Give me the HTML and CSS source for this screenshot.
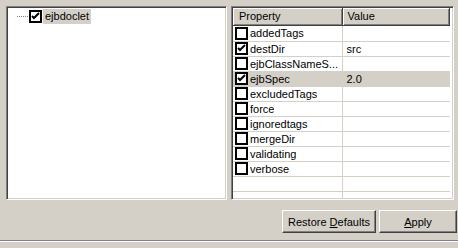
FILE: index.html
```html
<!DOCTYPE html>
<html lang="en">
<head>
    <meta charset="UTF-8">
    <title>ejbdoclet properties</title>
    <link rel="stylesheet" href="styles.css">
</head>
<body>
    <div class="panes">
        <!-- task tree -->
        <div class="tree sunken">
            <div class="tree-item">
                <span class="dots"></span>
                <span class="cb on"><svg width="9" height="9" viewBox="0 0 9 9"><path d="M1 4 L3 6 L8 1" /></svg></span>
                <span class="tree-label">ejbdoclet</span>
            </div>
        </div>

        <!-- property sheet -->
        <div class="props sunken">
            <table class="grid">
                <thead>
                    <tr><th class="col-name">Property</th><th>Value</th></tr>
                </thead>
                <tbody id="rows"></tbody>
            </table>
        </div>
    </div>

    <div class="buttons">
        <button class="btn btn-restore">Restore <u>D</u>efaults</button>
        <button class="btn btn-apply"><u>A</u>pply</button>
    </div>
    <div class="separator"></div>

    <script>
        // Eigenschaften des ejbdoclet-Tasks
        const props = [
            { name: 'addedTags', value: '', on: false },
            { name: 'destDir', value: 'src', on: true },
            { name: 'ejbClassNameS...', value: '', on: false },
            { name: 'ejbSpec', value: '2.0', on: true, selected: true },
            { name: 'excludedTags', value: '', on: false },
            { name: 'force', value: '', on: false },
            { name: 'ignoredtags', value: '', on: false },
            { name: 'mergeDir', value: '', on: false },
            { name: 'validating', value: '', on: false },
            { name: 'verbose', value: '', on: false },
            { name: '', value: '', empty: true },
            { name: '', value: '', empty: true }
        ];

        const check = '<svg width="9" height="9" viewBox="0 0 9 9"><path d="M1 4 L3 6 L8 1" /></svg>';
        const tbody = document.getElementById('rows');

        props.forEach(p => {
            const tr = document.createElement('tr');
            if (p.selected) tr.className = 'selected';
            if (p.empty) tr.className = 'empty';

            const nameCell = document.createElement('td');
            nameCell.className = 'col-name';
            if (!p.empty) {
                nameCell.innerHTML = `<span class="cell"><span class="cb${p.on ? ' on' : ''}">${p.on ? check : ''}</span><span class="name"></span></span>`;
                nameCell.querySelector('.name').textContent = p.name;
            }

            const valueCell = document.createElement('td');
            valueCell.textContent = p.value;

            tr.appendChild(nameCell);
            tr.appendChild(valueCell);
            tbody.appendChild(tr);
        });
    </script>
</body>
</html>
```

FILE: styles.css
```css
body {
    margin: 0;
    padding: 6px 1px 0 6px;
    background: #d4d0c8;
    font-family: "Liberation Sans", Arial, sans-serif;
    font-size: 11px;
    color: #000;
    width: 451px;
    height: 242px;
    overflow: hidden;
}
.panes {
    display: flex;
    gap: 4px;
    height: 194px;
}
.sunken {
    box-sizing: border-box;
    background: white;
    border: 1px solid;
    border-color: #808080 #fff #fff #808080;
    box-shadow: inset 1px 1px #404040, inset -1px -1px #d4d0c8;
    padding: 1px;
    overflow: hidden;
}
.tree {
    width: 221px;
}
.props {
    width: 223px;
}

/* Baum */
.tree-item {
    display: flex;
    align-items: center;
    height: 15px;
    margin-top: 1px;
}
.dots {
    width: 11px;
    margin-left: 9px;
    border-top: 1px dotted #808080;
}
.cb {
    box-sizing: border-box;
    width: 13px;
    height: 13px;
    border: 2px solid #000;
    background: white;
    display: inline-flex;
    align-items: center;
    justify-content: center;
    flex: none;
}
.cb svg path {
    fill: none;
    stroke: #000;
    stroke-width: 2;
}
.tree-item .cb {
    margin-left: 1px;
}
.tree-label {
    margin-left: 1px;
    padding: 0 2px;
    line-height: 15px;
    background: #d4d0c8;
}

/* Eigenschaftstabelle */
.grid {
    border-collapse: collapse;
    table-layout: fixed;
    width: 217px;
}
.grid th,
.grid td {
    box-sizing: border-box;
}
.grid th {
    height: 17px;
    padding: 0 0 0 5px;
    background: #d4d0c8;
    text-align: left;
    font-weight: normal;
    border-right: 1px solid #404040;
    border-bottom: 1px solid #404040;
    box-shadow: inset 1px 1px #fff, inset -1px -1px #808080;
}
.grid th.col-name {
    padding-left: 6px;
}
.grid .col-name {
    width: 109px;
}
.grid td {
    height: 15px;
    padding: 0 0 0 4px;
    border-bottom: 1px solid #d4d0c8;
    white-space: nowrap;
    overflow: hidden;
}
.grid td.col-name {
    padding-left: 2px;
    border-right: 1px solid #d4d0c8;
}
.grid tbody tr:first-child td {
    height: 16px;
}
.grid tr.selected td {
    background: #d4d0c8;
}
.cell {
    display: flex;
    align-items: center;
    gap: 2px;
}
.name {
    overflow: hidden;
}

/* Knöpfe */
.buttons {
    display: flex;
    justify-content: flex-end;
    gap: 3px;
    margin-top: 10px;
}
.btn {
    height: 23px;
    padding: 0;
    font-family: inherit;
    font-size: 11px;
    color: #000;
    background: #d4d0c8;
    border: 1px solid;
    border-color: #fff #404040 #404040 #fff;
    box-shadow: inset -1px -1px #808080;
}
.btn-restore {
    width: 94px;
}
.btn-apply {
    width: 78px;
}
.separator {
    margin: 7px -1px 0 -6px;
    border-top: 1px solid #808080;
    border-bottom: 1px solid #fff;
}
```
